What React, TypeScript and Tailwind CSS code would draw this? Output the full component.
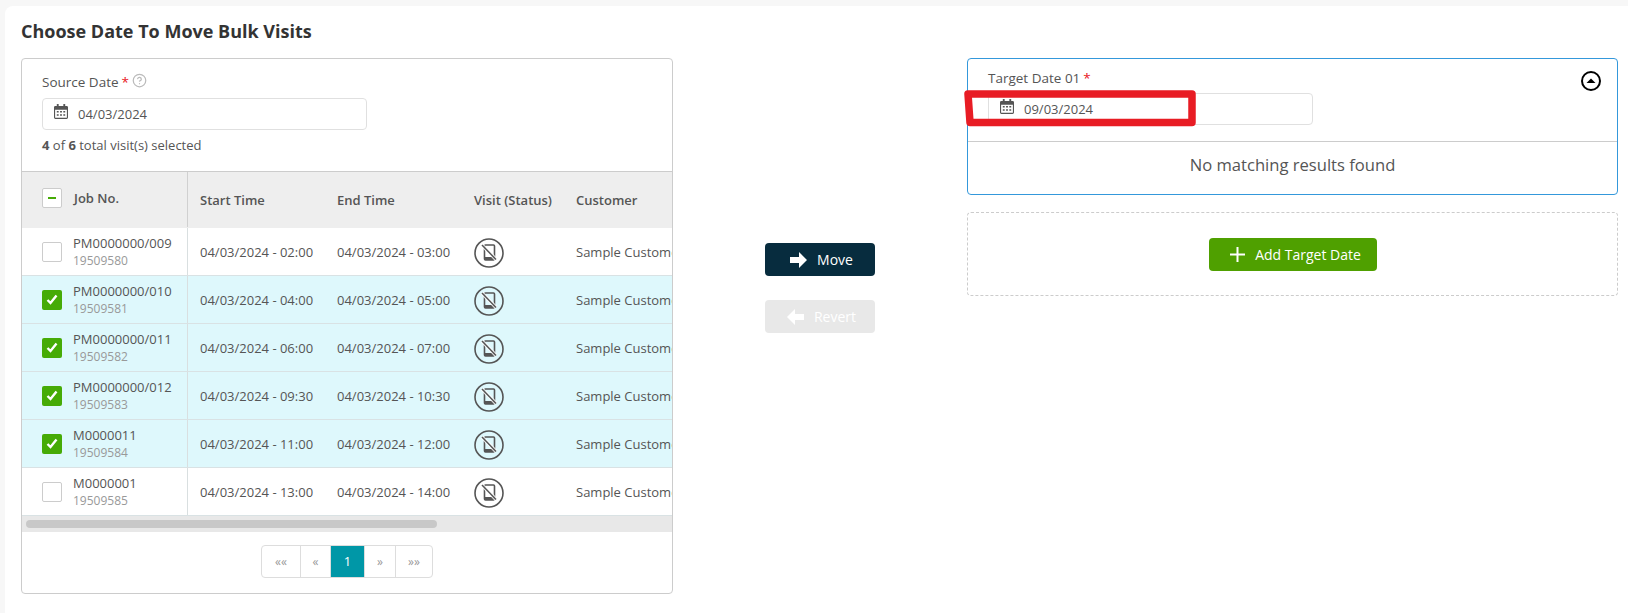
import { CircleHelp } from 'lucide-react';

interface Visit {
  job: string;
  id: string;
  start: string;
  end: string;
  checked: boolean;
}

const VISITS: Visit[] = [
  { job: 'PM0000000/009', id: '19509580', start: '02:00', end: '03:00', checked: false },
  { job: 'PM0000000/010', id: '19509581', start: '04:00', end: '05:00', checked: true },
  { job: 'PM0000000/011', id: '19509582', start: '06:00', end: '07:00', checked: true },
  { job: 'PM0000000/012', id: '19509583', start: '09:30', end: '10:30', checked: true },
  { job: 'M0000011', id: '19509584', start: '11:00', end: '12:00', checked: true },
  { job: 'M0000001', id: '19509585', start: '13:00', end: '14:00', checked: false },
];

const PAGES = [
  { label: '««', width: 'w-[39px]' },
  { label: '«', width: 'w-[30px]' },
  { label: '1', width: 'w-[34px]', active: true },
  { label: '»', width: 'w-[31px]' },
  { label: '»»', width: 'w-[36px]' },
];

function CalendarIcon() {
  return (
    <svg width="14" height="15" viewBox="0 0 15 16" className="mb-[5px] shrink-0 text-[#555]">
      <rect x="3" y="0" width="2" height="3" fill="currentColor" />
      <rect x="10" y="0" width="2" height="3" fill="currentColor" />
      <path d="M1.5 2h12A1.5 1.5 0 0 1 15 3.500V14.500A1.500 1.500 0 0 1 13.500 16h-12A1.500 1.500 0 0 1 0 14.500V3.500A1.500 1.500 0 0 1 1.500 2zM1.200 6v8.300c0 .3.200.5.500.5h11.600c.3 0 .5-.2.500-.5V6z" fill="currentColor" fillRule="evenodd" />
      <path d="M3 7.500h2v1.500H3zM6.500 7.500h2v1.500h-2zM10 7.500h2v1.500h-2zM3 11h2v1.500H3zM6.500 11h2v1.500h-2zM10 11h2v1.500h-2z" fill="currentColor" />
    </svg>
  );
}

function NoDeviceIcon() {
  return (
    <svg width="30" height="30" viewBox="0 0 30 30" className="text-[#555]">
      <circle cx="15" cy="15" r="14" fill="none" stroke="currentColor" strokeWidth="1.600" />
      <rect x="10.500" y="7" width="10" height="15" rx="1" fill="none" stroke="currentColor" strokeWidth="1.600" />
      <path d="M10.500 19h10v3h-10z" fill="currentColor" />
      <path d="M8 7 22 21.500" stroke="#fff" strokeOpacity="0.850" strokeWidth="3.500" />
      <path d="M8 7 22 21.500" stroke="currentColor" strokeWidth="1.500" />
    </svg>
  );
}

function Checkbox({ checked, partial }: { checked?: boolean; partial?: boolean }) {
  if (checked) {
    return (
      <span className="flex h-5 w-5 shrink-0 items-center justify-center rounded-[2px] bg-[#46ab06]">
        <svg width="12" height="11" viewBox="0 0 12 11">
          <path d="M1.500 6 4.500 9 10.500 1.500" fill="none" stroke="#fff" strokeWidth="2.400" />
        </svg>
      </span>
    );
  }
  return (
    <span className="flex h-5 w-5 shrink-0 items-center justify-center rounded-[2px] border border-[#ccc] bg-white">
      {partial && <span className="h-[2px] w-2 bg-[#46ab06]" />}
    </span>
  );
}

function DateInput({ value }: { value: string }) {
  return (
    <div className="flex h-[32px] w-[325px] items-center gap-[10px] rounded-[4px] border border-[#e0e0e0] bg-white pl-[11px] text-[13px] text-[#555]">
      <CalendarIcon />
      <span className="pt-[2px]">{value}</span>
    </div>
  );
}

function VisitRow({ visit }: { visit: Visit }) {
  const rowBg = visit.checked ? 'bg-[#def8fc]' : 'bg-white';
  return (
    <div className={`flex h-[48px] border-b border-[#d9e2e4] last:h-[47px] ${rowBg}`}>
      <div className="flex w-[166px] shrink-0 items-center gap-[11px] border-r border-[#d9dfe0] pl-5">
        <Checkbox checked={visit.checked} />
        <div className="leading-[18px]">
          <div className="text-[13px] text-[#555]">{visit.job}</div>
          <div className="text-[12px] text-[#999]">{visit.id}</div>
        </div>
      </div>
      <div className="flex w-[136px] shrink-0 items-center pl-3 pt-[2px] text-[13px] text-[#555]">04/03/2024 - {visit.start}</div>
      <div className="flex w-[137px] shrink-0 items-center pl-[13px] pt-[2px] text-[13px] text-[#555]">04/03/2024 - {visit.end}</div>
      <div className="flex w-[102px] shrink-0 items-center pl-[13px] pt-[2px]">
        <NoDeviceIcon />
      </div>
      <div className="flex shrink-0 items-center whitespace-nowrap pl-[13px] pt-[2px] text-[13px] text-[#555]">Sample Customer</div>
    </div>
  );
}

export default function App() {
  return (
    <div className="relative h-[613px] w-[1628px] overflow-hidden bg-[#f7f7f7] pl-[5px] pt-[6px] font-['Open_Sans',sans-serif]">
      <div className="h-full rounded-tl-lg bg-white pl-4 pr-[10px] pt-[13px]">
        <h2 className="h-[24px] text-[18px] font-bold leading-[24px] text-[#333]">Choose Date To Move Bulk Visits</h2>

        <div className="mt-[15px] flex items-start">
          {/* 왼쪽 카드 */}
          <div className="h-[536px] w-[652px] shrink-0 overflow-hidden rounded-[4px] border border-[#ccc]">
            <div className="h-[112px] px-5 pt-[13px]">
              <div className="flex h-5 items-center text-[13.500px] text-[#555]">
                <span>Source Date</span>
                <span className="ml-[3px] text-[#e8141c]">*</span>
                <CircleHelp className="ml-[3px] mb-1 h-[15px] w-[15px] text-[#bbb]" />
              </div>
              <div className="mt-[6px]">
                <DateInput value="04/03/2024" />
              </div>
              <div className="mt-[6px] text-[13px] leading-[18px] text-[#555]">
                <b>4</b> of <b>6</b> total visit(s) selected
              </div>
            </div>

            <div className="flex h-[57px] border-y border-t-[#ccc] border-b-transparent bg-[#eee] text-[13px] font-semibold text-[#555]">
              <div className="flex w-[166px] shrink-0 items-center gap-3 border-r border-[#d0d0d0] pb-[3px] pl-5">
                <Checkbox partial />
                <span className="pt-[2px]">Job No.</span>
              </div>
              <div className="flex w-[136px] shrink-0 items-center pl-3 pt-[2px]">Start Time</div>
              <div className="flex w-[137px] shrink-0 items-center pl-[13px] pt-[2px]">End Time</div>
              <div className="flex w-[102px] shrink-0 items-center pl-[13px] pt-[2px]">Visit (Status)</div>
              <div className="flex shrink-0 items-center pl-[13px] pt-[2px]">Customer</div>
            </div>

            {VISITS.map(visit => (
              <VisitRow key={visit.id} visit={visit} />
            ))}

            <div className="flex h-4 items-center bg-[#e8e8e8] pl-1">
              <div className="h-2 w-[411px] rounded-full bg-[#c8c8c8]" />
            </div>

            <div className="mt-[13px] flex justify-center">
              <div className="flex h-[33px] overflow-hidden rounded-[4px] border border-[#ddd]">
                {PAGES.map(page => (
                  <span
                    key={page.label}
                    className={`flex items-center justify-center border-r border-[#ddd] last:border-r-0 ${page.width} ${
                      page.active ? 'bg-[#0097a7] text-[13px] text-white' : 'text-[12px] text-[#999]'
                    }`}
                  >
                    {page.label}
                  </span>
                ))}
              </div>
            </div>
          </div>

          {/* 이동 버튼 */}
          <div className="flex flex-1 flex-col items-center gap-[24px] pt-[185px] text-[14px]">
            <button className="flex h-[33px] w-[110px] items-center justify-center gap-[10px] rounded-[4px] bg-[#072c3e] pl-[3px] text-white">
              <svg width="17" height="16" viewBox="0 0 17 16">
                <path d="M0 5h9V0l8 8-8 8v-5H0z" fill="#fff" />
              </svg>
              Move
            </button>
            <button className="flex h-[33px] w-[110px] items-center justify-center gap-[10px] rounded-[4px] bg-[#e8e8e8] pl-[3px] text-white">
              <svg width="17" height="16" viewBox="0 0 17 16">
                <path d="M17 5H8V0L0 8l8 8v-5h9z" fill="#fff" />
              </svg>
              Revert
            </button>
          </div>

          {/* 오른쪽 대상 날짜 */}
          <div className="w-[651px] shrink-0">
            <div className="h-[137px] rounded-[4px] border border-[#3498db]">
              <div className="flex h-[83px] justify-between border-b border-[#ccc] pl-5 pr-4">
                <div className="pt-[9px]">
                  <div className="flex h-5 items-center text-[13.500px] text-[#555]">
                    <span>Target Date 01</span>
                    <span className="ml-[3px] text-[#e8141c]">*</span>
                  </div>
                  <div className="mt-[5px]">
                    <DateInput value="09/03/2024" />
                  </div>
                </div>
                <svg width="20" height="20" viewBox="0 0 20 20" className="mt-3">
                  <circle cx="10" cy="10" r="9" fill="none" stroke="#000" strokeWidth="2" />
                  <path d="M5.500 12 10 7.500l4.500 4.500z" fill="#000" />
                </svg>
              </div>
              <div className="flex h-[52px] items-center justify-center pb-[6px] text-[16.600px] font-medium text-[#555]">No matching results found</div>
            </div>

            <div className="mt-[17px] flex h-[84px] items-center justify-center rounded-[4px] border border-dashed border-[#ccc]">
              <button className="flex h-[33px] w-[168px] items-center justify-center gap-[10px] rounded-[4px] bg-[#4fa000] pl-[6px] text-[14px] text-white">
                <svg width="15" height="15" viewBox="0 0 15 15">
                  <path d="M6.500 0h2v6.500H15v2H8.500V15h-2V8.500H0v-2h6.500z" fill="#fff" />
                </svg>
                Add Target Date
              </button>
            </div>
          </div>
        </div>
      </div>

      {/* 스크린샷 위 빨간 표시 */}
      <svg width="236" height="40" viewBox="0 0 236 40" className="absolute left-[963px] top-[89px]">
        <path d="M5 5H229V33.500H7Z" fill="none" stroke="#e81c24" strokeWidth="7.500" strokeLinejoin="round" />
      </svg>
    </div>
  );
}
